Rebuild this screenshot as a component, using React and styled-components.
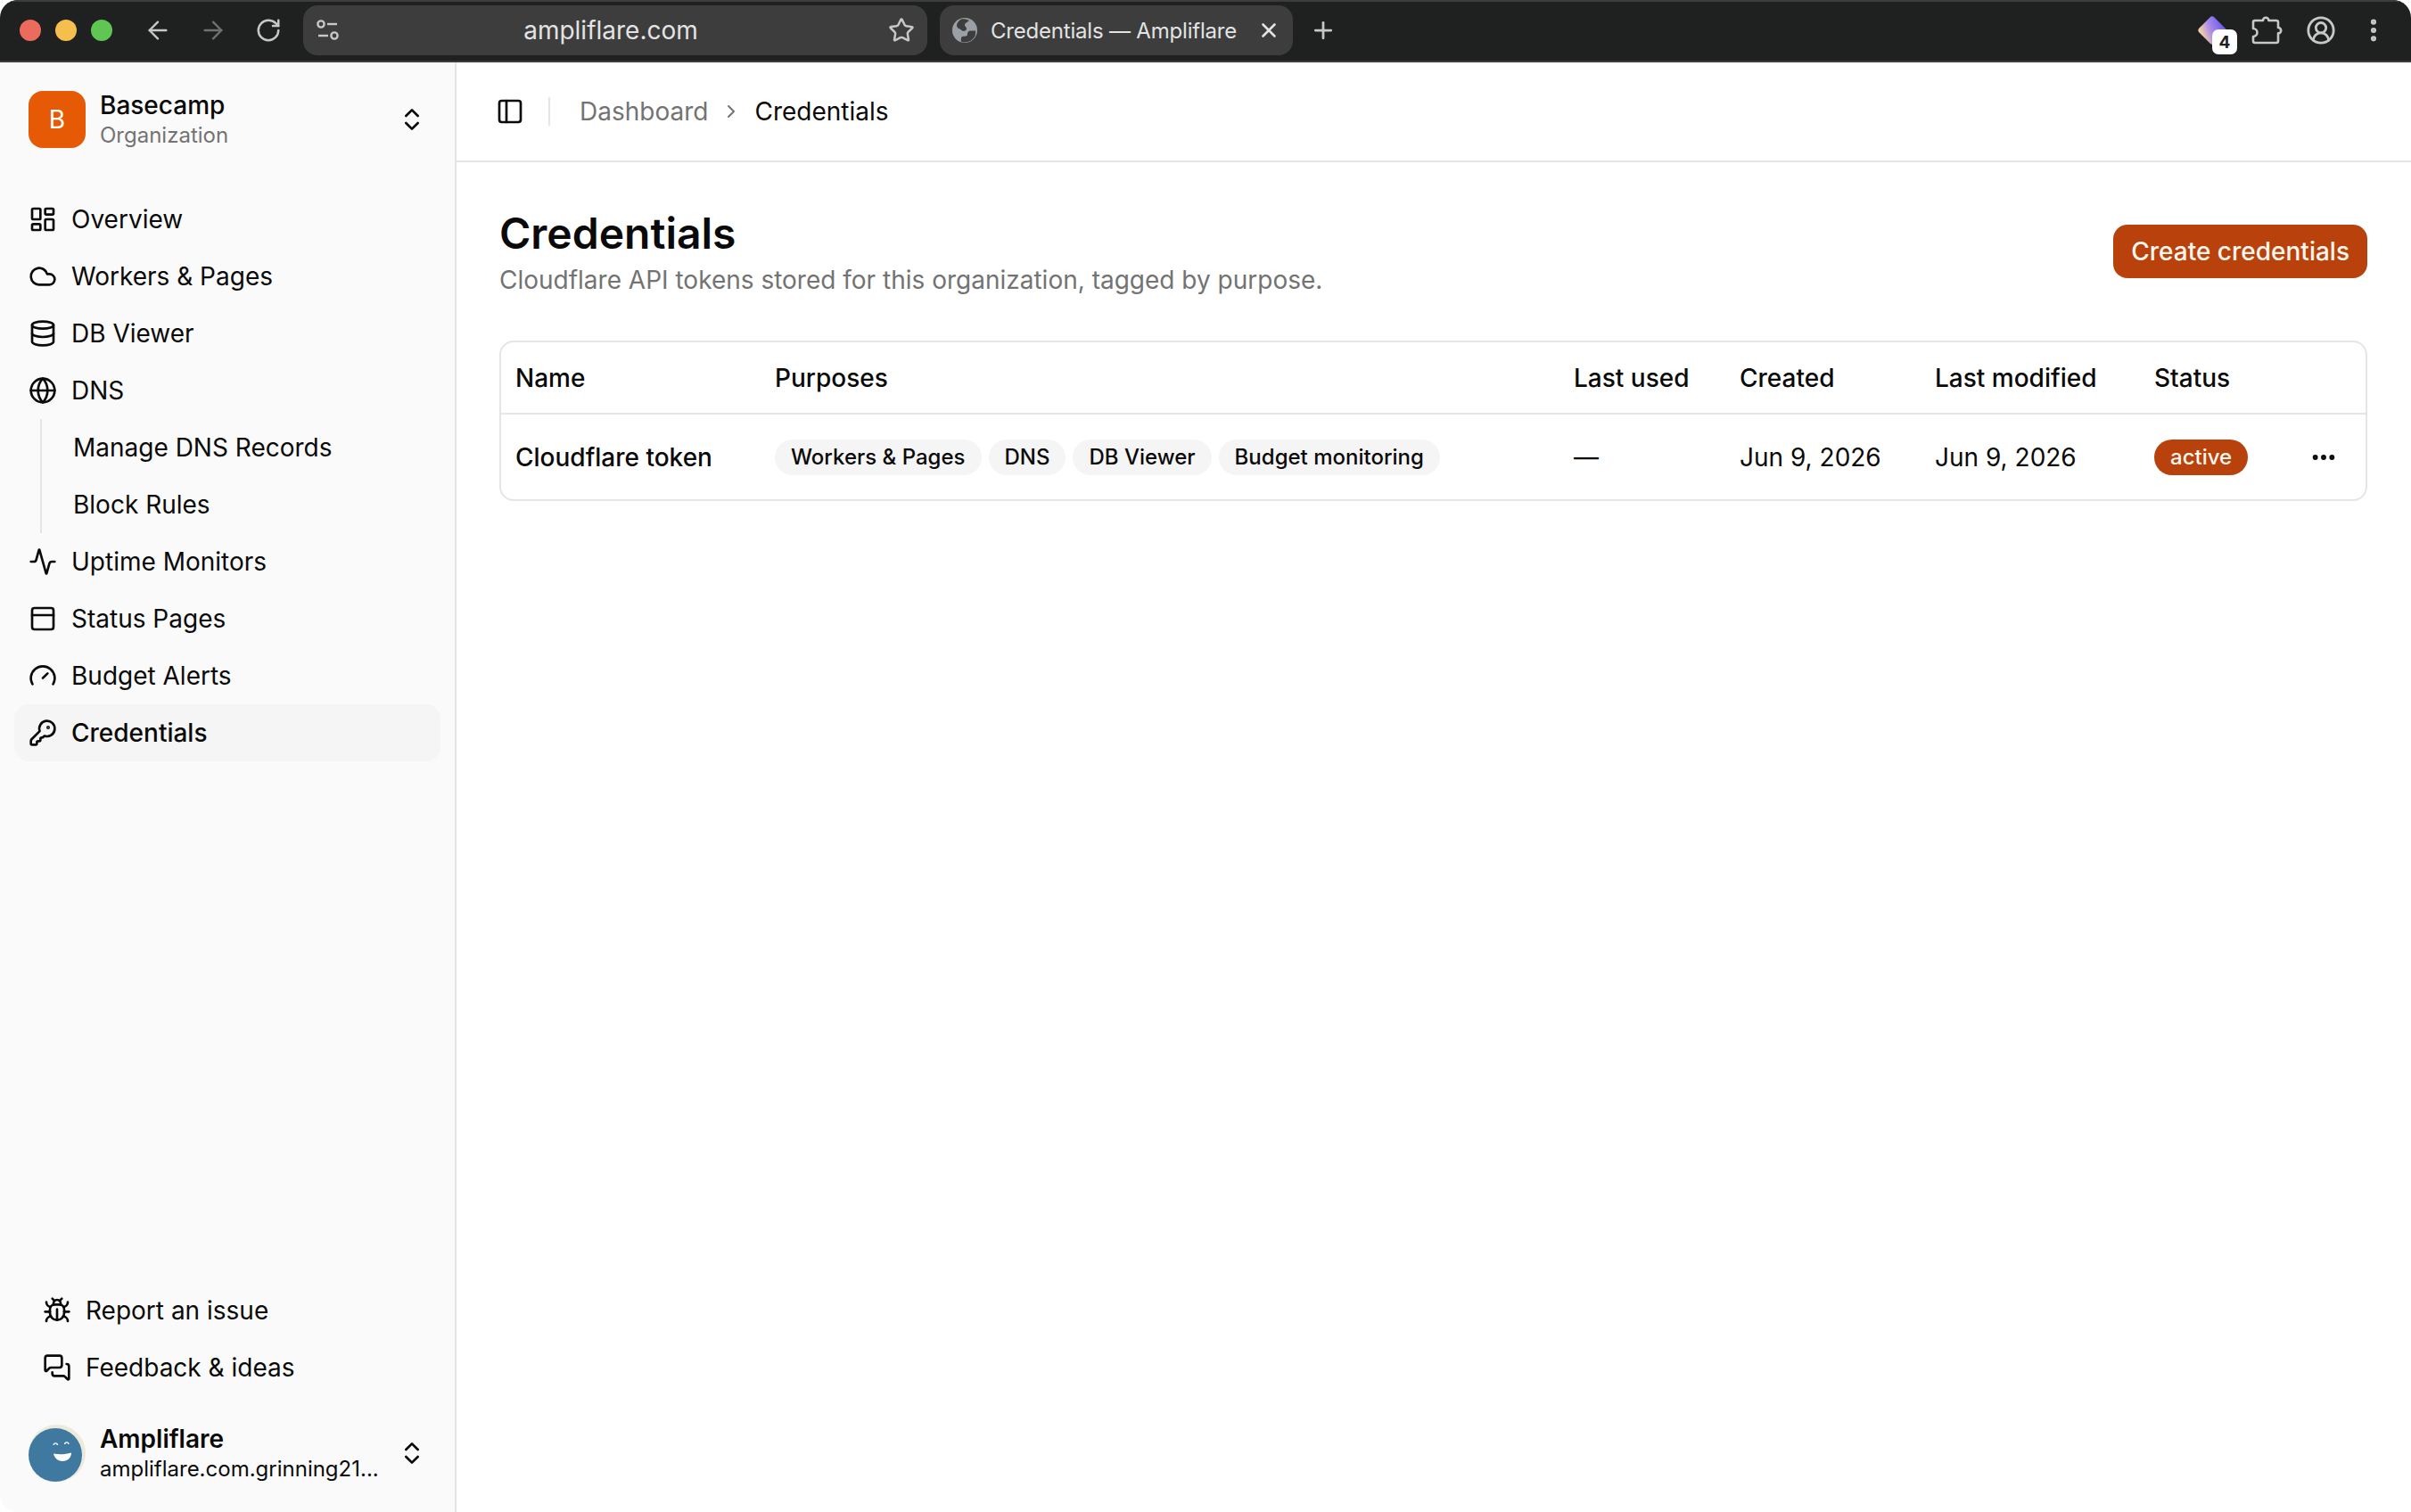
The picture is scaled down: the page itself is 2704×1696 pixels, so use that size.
import React from "react";
import styled, { createGlobalStyle } from "styled-components";
import {
  Activity,
  ArrowLeft,
  ArrowRight,
  Bug,
  ChevronRight,
  ChevronsUpDown,
  CircleUserRound,
  Cloud,
  Database,
  Ellipsis,
  EllipsisVertical,
  Gauge,
  Globe,
  KeyRound,
  LayoutDashboard,
  MessagesSquare,
  PanelLeft,
  PanelTop,
  Plus,
  RotateCw,
  Star,
  X,
} from "lucide-react";

const GlobalStyle = createGlobalStyle`
  html, body {
    margin: 0;
    padding: 0;
    background: #ffffff;
  }
  body {
    font-family: Inter, "Liberation Sans", sans-serif;
    color: #0a0a0a;
  }
`;

const Window = styled.div`
  width: 2704px;
  height: 1696px;
  display: flex;
  flex-direction: column;
  overflow: hidden;
  border-radius: 20px;
`;

const BrowserBar = styled.div`
  height: 70px;
  flex: none;
  box-sizing: border-box;
  display: flex;
  align-items: center;
  padding: 0 26px 2px 22px;
  background: #1f2120;
  border-top: 2px solid #3c3d3c;
  border-bottom: 2px solid #3c3d3c;
  color: #c7c7c7;
`;

const Lights = styled.div`
  display: flex;
  gap: 16px;
  margin-right: 20px;
`;

const Light = styled.span`
  width: 24px;
  height: 24px;
  border-radius: 50%;
  background: ${props => props.color};
`;

const BarButton = styled.span`
  width: 62px;
  flex: none;
  display: flex;
  justify-content: center;
  color: ${props => (props.dim ? "#6f706f" : "#c7c7c7")};
`;

const UrlBar = styled.div`
  width: 700px;
  height: 56px;
  margin-left: 8px;
  box-sizing: border-box;
  display: flex;
  align-items: center;
  justify-content: space-between;
  padding: 0 14px 0 14px;
  border-radius: 16px;
  background: #3c3d3c;
  font-size: 28px;
  color: #e3e3e3;
`;

const UrlText = styled.span`
  margin-right: 8px;
`;

const Tab = styled.div`
  width: 396px;
  height: 56px;
  margin-left: 14px;
  box-sizing: border-box;
  display: flex;
  align-items: center;
  padding: 0 14px 0 14px;
  border-radius: 16px;
  background: #3c3d3c;
  font-size: 24px;
  letter-spacing: -0.2px;
  color: #e3e3e3;
`;

const TabTitle = styled.span`
  flex: 1;
  margin-left: 15px;
  white-space: nowrap;
`;

const NewTab = styled.span`
  margin-left: 19px;
  display: flex;
  color: #c7c7c7;
`;

const BarEnd = styled.div`
  margin-left: auto;
  display: flex;
  align-items: center;
  gap: 26px;
`;

const ExtensionBadge = styled.span`
  position: relative;
  width: 40px;
  height: 40px;
  margin-right: -3px;
  display: flex;
`;

const BadgeCount = styled.span`
  position: absolute;
  left: 20px;
  top: 19px;
  width: 28px;
  height: 28px;
  border-radius: 7px;
  background: #ffffff;
  color: #1f2120;
  font-size: 19px;
  font-weight: 700;
  display: flex;
  align-items: center;
  justify-content: center;
`;

const Body = styled.div`
  flex: 1;
  min-height: 0;
  display: flex;
`;

const Sidebar = styled.aside`
  width: 512px;
  flex: none;
  box-sizing: border-box;
  display: flex;
  flex-direction: column;
  background: #fafafa;
  border-right: 2px solid #e5e5e5;
  padding: 32px 16px 34px;
`;

const SwitcherRow = styled.div`
  display: flex;
  align-items: center;
  height: 64px;
  padding: 0 16px;
  gap: 16px;
`;

const OrgLogo = styled.div`
  width: 64px;
  height: 64px;
  border-radius: 16px;
  flex: none;
  background: #e65a05;
  color: #ffffff;
  font-size: 28px;
  display: flex;
  align-items: center;
  justify-content: center;
`;

const Avatar = styled.div`
  width: 64px;
  height: 64px;
  flex: none;
  display: flex;
`;

const SwitcherText = styled.div`
  flex: 1;
  min-width: 0;
  display: flex;
  flex-direction: column;
  gap: 2px;
`;

const SwitcherName = styled.div`
  font-size: 28px;
  line-height: 34px;
  font-weight: ${props => (props.strong ? 600 : 500)};
  color: #0a0a0a;
`;

const SwitcherSub = styled.div`
  font-size: 24px;
  line-height: 30px;
  color: ${props => (props.muted ? "#737373" : "#0a0a0a")};
  white-space: nowrap;
`;

const Nav = styled.nav`
  margin-top: 48px;
  display: flex;
  flex-direction: column;
`;

const NavItem = styled.div`
  height: 64px;
  box-sizing: border-box;
  display: flex;
  align-items: center;
  gap: 16px;
  padding: 0 16px;
  border-radius: 16px;
  font-size: 28px;
  font-weight: ${props => (props.active ? 500 : 400)};
  white-space: nowrap;
  color: #0a0a0a;
  background: ${props => (props.active ? "#f5f5f5" : "transparent")};
`;

const SubNav = styled.div`
  margin-left: 29px;
  padding-left: 35px;
  border-left: 2px solid #e5e5e5;
  display: flex;
  flex-direction: column;
`;

const SubItem = styled.div`
  height: 64px;
  display: flex;
  align-items: center;
  font-size: 28px;
  white-space: nowrap;
  color: #0a0a0a;
`;

const SideFooter = styled.div`
  margin-top: auto;
  display: flex;
  flex-direction: column;
`;

const FooterLinks = styled.div`
  display: flex;
  flex-direction: column;
  padding: 0 16px;
  margin-bottom: 32px;
`;

const Main = styled.main`
  flex: 1;
  min-width: 0;
  background: #ffffff;
`;

const TopBar = styled.header`
  height: 112px;
  box-sizing: border-box;
  display: flex;
  align-items: center;
  padding: 0 44px;
  border-bottom: 2px solid #e5e5e5;
`;

const TopDivider = styled.span`
  width: 2px;
  height: 32px;
  margin: 0 33px 0 27px;
  background: #e5e5e5;
`;

const Crumb = styled.span`
  font-size: 28px;
  color: ${props => (props.current ? "#0a0a0a" : "#737373")};
`;

const CrumbSep = styled.span`
  display: flex;
  margin: 0 14px;
  color: #737373;
`;

const Content = styled.section`
  padding: 48px 49px 0 48px;
`;

const TitleRow = styled.div`
  display: flex;
  justify-content: space-between;
  align-items: center;
`;

const Title = styled.h1`
  margin: 0;
  font-size: 48px;
  line-height: 64px;
  font-weight: 600;
`;

const Subtitle = styled.p`
  margin: 0;
  font-size: 28px;
  line-height: 40px;
  color: #737373;
`;

const PrimaryButton = styled.button`
  height: 60px;
  padding: 0 20px;
  border: 0;
  border-radius: 16px;
  background: #b9420c;
  color: #fff7ed;
  font: 500 28px Inter, sans-serif;
`;

const TableCard = styled.div`
  margin-top: 48px;
  border: 2px solid #e5e5e5;
  border-radius: 16px;
  overflow: hidden;
`;

const Table = styled.table`
  width: 100%;
  border-collapse: collapse;
  table-layout: fixed;
`;

const HeadRow = styled.tr`
  height: 80px;
  border-bottom: 2px solid #e5e5e5;
`;

const BodyRow = styled.tr`
  height: 96px;
`;

const Th = styled.th`
  box-sizing: border-box;
  padding: 0 16px;
  font-size: 28px;
  font-weight: 500;
  text-align: left;
  white-space: nowrap;
  width: ${props => props.$width};
`;

const Td = styled.td`
  padding: 0 16px;
  font-size: 28px;
  font-weight: ${props => (props.strong ? 500 : 400)};
  white-space: nowrap;
`;

const Chips = styled.div`
  display: flex;
  gap: 8px;
`;

const Chip = styled.span`
  height: 40px;
  padding: 0 18px;
  border-radius: 20px;
  background: #f5f5f5;
  font-size: 24px;
  font-weight: 500;
  display: flex;
  align-items: center;
`;

const StatusPill = styled.span`
  display: inline-flex;
  align-items: center;
  height: 40px;
  padding: 0 18px;
  border-radius: 20px;
  background: #b9420c;
  color: #fff7ed;
  font-size: 24px;
  font-weight: 500;
`;

const RowMenu = styled.div`
  display: flex;
  justify-content: flex-end;
  padding-right: 15px;
`;

const NAV_TOP = [
  { label: "Overview", icon: LayoutDashboard },
  { label: "Workers & Pages", icon: Cloud },
  { label: "DB Viewer", icon: Database },
  { label: "DNS", icon: Globe },
];

const NAV_BOTTOM = [
  { label: "Uptime Monitors", icon: Activity },
  { label: "Status Pages", icon: PanelTop },
  { label: "Budget Alerts", icon: Gauge },
  { label: "Credentials", icon: KeyRound, active: true },
];

const COLUMNS = [
  { label: "Name", width: "291px" },
  { label: "Purposes", width: "896px" },
  { label: "Last used", width: "186px" },
  { label: "Created", width: "219px" },
  { label: "Last modified", width: "246px" },
  { label: "Status", width: "141px" },
  { label: "", width: "auto" },
];

const PURPOSES = ["Workers & Pages", "DNS", "DB Viewer", "Budget monitoring"];

const TuneIcon = () => (
  <svg width="28" height="28" viewBox="0 0 28 28" fill="none" stroke="#c7c7c7" strokeWidth="2.4">
    <circle cx="6" cy="7" r="3.6" />
    <path d="M13 7h11" />
    <path d="M3 20h11" />
    <circle cx="21" cy="20" r="3.6" />
  </svg>
);

const FaviconGlobe = () => (
  <svg width="28" height="28" viewBox="0 0 28 28">
    <circle cx="14" cy="14" r="14" fill="#9aa0a6" />
    <path d="M10 1.500c-3 2-5 4.500-5 7 0 3.500 3.500 3.500 5.500 5.500 1.500 1.500 5 1 5.500-1.500.5-2-2.500-3-2-5 .4-1.800 3-2.500 5-4.500-3-1.500-6-2-9-1.500z" fill="#3c3d3c" />
    <path d="M26.500 14c-2 .5-4 .5-6 .5-2.500 0-3.500 2-3.500 4 0 2.500-3 2-5.500 2.500-1.500.3-2 2.500-1.500 6 6 1.500 12.500-1 15.500-6.500.6-2 .8-4.500.5-6.500z" fill="#3c3d3c" />
  </svg>
);

const ExtensionIcon = () => (
  <svg width="40" height="40" viewBox="0 0 40 40">
    <defs>
      <linearGradient id="ext" x1="0.75" y1="0" x2="0.3" y2="1">
        <stop offset="0" stopColor="#6c5cf0" />
        <stop offset="0.55" stopColor="#a98ae8" />
        <stop offset="1" stopColor="#f4cfa6" />
      </linearGradient>
    </defs>
    <rect x="8" y="8" width="24" height="24" rx="3.5" transform="rotate(45 20 20)" fill="url(#ext)" />
  </svg>
);

const PuzzleIcon = () => (
  <svg width="36" height="36" viewBox="0 0 36 36" fill="none" stroke="#c7c7c7" strokeWidth="2.6" strokeLinejoin="round">
    <path d="M5 7h9a3.200 3.200 0 0 1 6.400 0H29a2 2 0 0 1 2 2v6a3.200 3.200 0 0 1 0 6.400V30a2 2 0 0 1-2 2H5a2 2 0 0 1-2-2v-5a4.500 4.500 0 0 0 0-9V9a2 2 0 0 1 2-2z" />
  </svg>
);

const SmileAvatar = () => (
  <svg width="64" height="64" viewBox="0 0 64 64">
    <circle cx="32" cy="32" r="32" fill="#eceadb" />
    <circle cx="30" cy="34" r="30" fill="#3f799f" />
    <path d="M27.500 23a2.800 2.800 0 0 1 5.600 0l-1.400 0a1.400 1.400 0 0 0-2.800 0z" fill="#ffffff" />
    <path d="M40 22a2.800 2.800 0 0 1 5.600 0l-1.400 0a1.400 1.400 0 0 0-2.800 0z" fill="#ffffff" />
    <path d="M28 32.500c6.500 1.300 13 1 20-1 0 5.500-4 9.500-10 9.500-5.500 0-9-4-10-8.500z" fill="#ffffff" />
  </svg>
);

export default function App() {
  return (
    <>
      <GlobalStyle />
      <Window>
        <BrowserBar>
          <Lights>
            <Light color="#ec6a5e" />
            <Light color="#f4bf4f" />
            <Light color="#61c554" />
          </Lights>
          <BarButton>
            <ArrowLeft size={32} strokeWidth={1.8} />
          </BarButton>
          <BarButton dim>
            <ArrowRight size={32} strokeWidth={1.8} />
          </BarButton>
          <BarButton>
            <RotateCw size={30} strokeWidth={2} />
          </BarButton>
          <UrlBar>
            <TuneIcon />
            <UrlText>ampliflare.com</UrlText>
            <Star size={30} strokeWidth={2} color="#c7c7c7" />
          </UrlBar>
          <Tab>
            <FaviconGlobe />
            <TabTitle>Credentials — Ampliflare</TabTitle>
            <X size={26} strokeWidth={2.4} />
          </Tab>
          <NewTab>
            <Plus size={30} strokeWidth={2.2} />
          </NewTab>
          <BarEnd>
            <ExtensionBadge>
              <ExtensionIcon />
              <BadgeCount>4</BadgeCount>
            </ExtensionBadge>
            <PuzzleIcon />
            <CircleUserRound size={34} strokeWidth={2} />
            <EllipsisVertical size={32} strokeWidth={2.6} />
          </BarEnd>
        </BrowserBar>
        <Body>
          <Sidebar>
            <SwitcherRow>
              <OrgLogo>B</OrgLogo>
              <SwitcherText>
                <SwitcherName>Basecamp</SwitcherName>
                <SwitcherSub muted>Organization</SwitcherSub>
              </SwitcherText>
              <ChevronsUpDown size={32} strokeWidth={2} />
            </SwitcherRow>
            <Nav>
              {NAV_TOP.map(({ label, icon: Icon }) => (
                <NavItem key={label}>
                  <Icon size={32} strokeWidth={2} />
                  {label}
                </NavItem>
              ))}
              <SubNav>
                <SubItem>Manage DNS Records</SubItem>
                <SubItem>Block Rules</SubItem>
              </SubNav>
              {NAV_BOTTOM.map(({ label, icon: Icon, active }) => (
                <NavItem key={label} active={active}>
                  <Icon size={32} strokeWidth={2} />
                  {label}
                </NavItem>
              ))}
            </Nav>
            <SideFooter>
              <FooterLinks>
                <NavItem>
                  <Bug size={32} strokeWidth={2} />
                  Report an issue
                </NavItem>
                <NavItem>
                  <MessagesSquare size={32} strokeWidth={2} />
                  Feedback &amp; ideas
                </NavItem>
              </FooterLinks>
              <SwitcherRow>
                <Avatar>
                  <SmileAvatar />
                </Avatar>
                <SwitcherText>
                  <SwitcherName strong>Ampliflare</SwitcherName>
                  <SwitcherSub>ampliflare.com.grinning21...</SwitcherSub>
                </SwitcherText>
                <ChevronsUpDown size={32} strokeWidth={2} />
              </SwitcherRow>
            </SideFooter>
          </Sidebar>
          <Main>
            <TopBar>
              <PanelLeft size={32} strokeWidth={2} />
              <TopDivider />
              <Crumb>Dashboard</Crumb>
              <CrumbSep>
                <ChevronRight size={24} strokeWidth={2} />
              </CrumbSep>
              <Crumb current>Credentials</Crumb>
            </TopBar>
            <Content>
              <TitleRow>
                <div>
                  <Title>Credentials</Title>
                  <Subtitle>Cloudflare API tokens stored for this organization, tagged by purpose.</Subtitle>
                </div>
                <PrimaryButton>Create credentials</PrimaryButton>
              </TitleRow>
              <TableCard>
                <Table>
                  <thead>
                    <HeadRow>
                      {COLUMNS.map(col => (
                        <Th key={col.label} $width={col.width}>
                          {col.label}
                        </Th>
                      ))}
                    </HeadRow>
                  </thead>
                  <tbody>
                    <BodyRow>
                      <Td strong>Cloudflare token</Td>
                      <Td>
                        <Chips>
                          {PURPOSES.map(purpose => (
                            <Chip key={purpose}>{purpose}</Chip>
                          ))}
                        </Chips>
                      </Td>
                      <Td>—</Td>
                      <Td>Jun 9, 2026</Td>
                      <Td>Jun 9, 2026</Td>
                      <Td>
                        <StatusPill>active</StatusPill>
                      </Td>
                      <Td>
                        <RowMenu>
                          <Ellipsis size={32} strokeWidth={2.4} />
                        </RowMenu>
                      </Td>
                    </BodyRow>
                  </tbody>
                </Table>
              </TableCard>
            </Content>
          </Main>
        </Body>
      </Window>
    </>
  );
}
